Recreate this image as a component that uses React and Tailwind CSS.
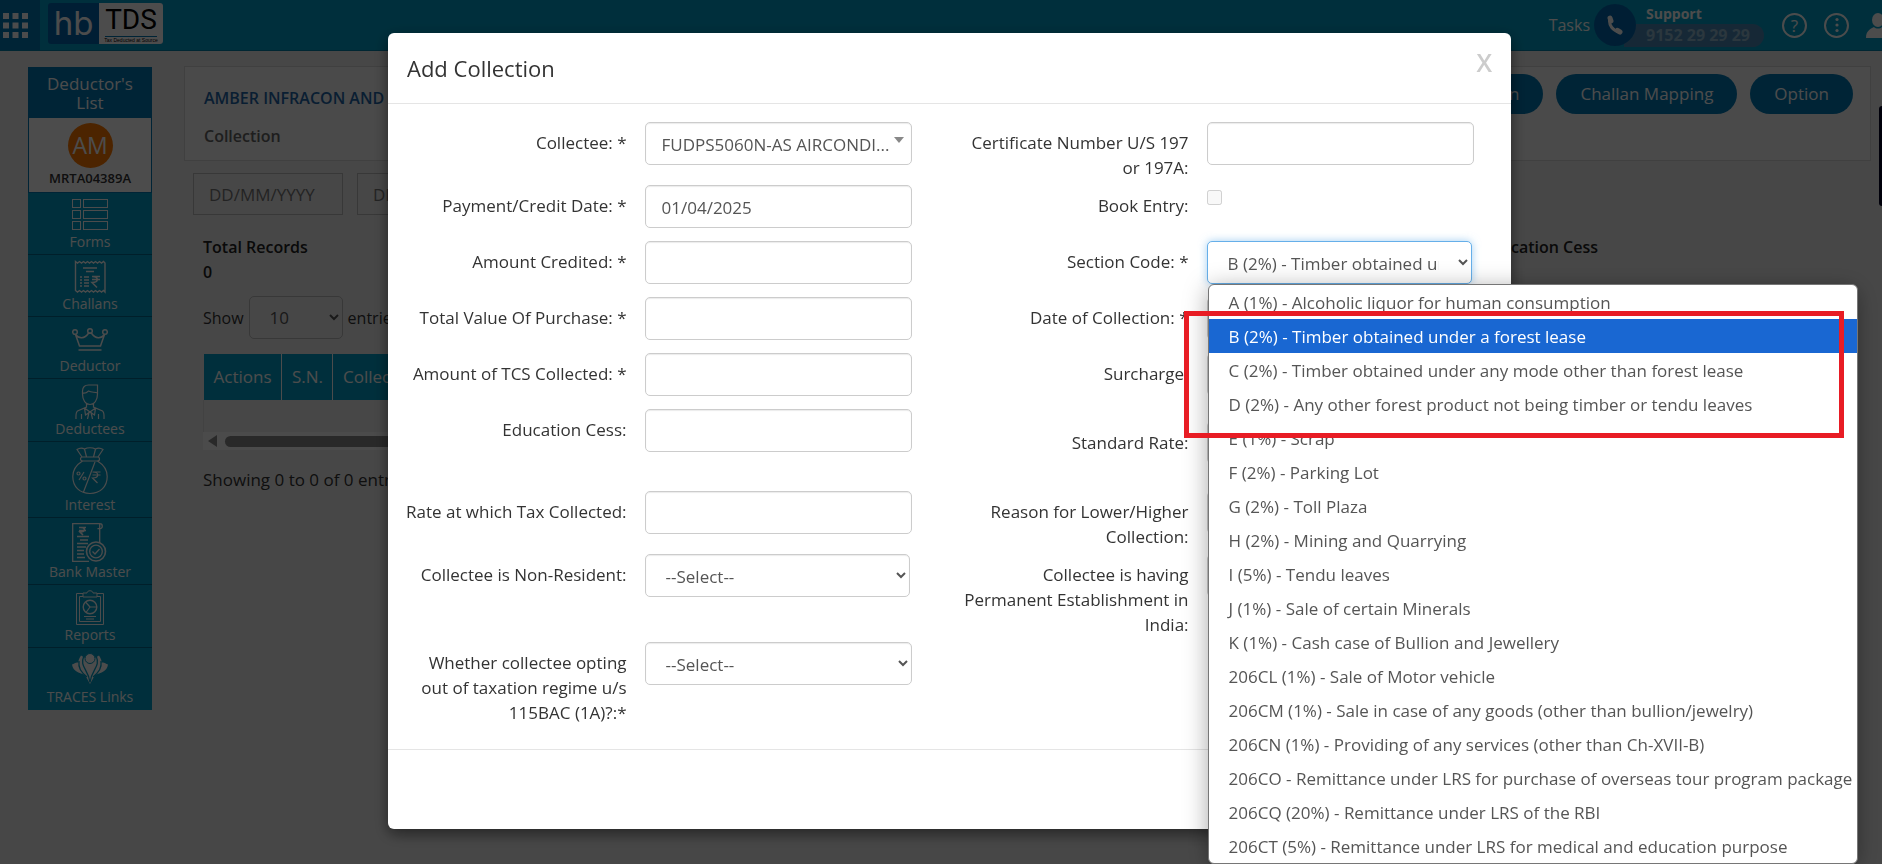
import React, { useState } from "react";

const SECTION_CODES = [
  "A (1%) - Alcoholic liquor for human consumption",
  "B (2%) - Timber obtained under a forest lease",
  "C (2%) - Timber obtained under any mode other than forest lease",
  "D (2%) - Any other forest product not being timber or tendu leaves",
  "E (1%) - Scrap",
  "F (2%) - Parking Lot",
  "G (2%) - Toll Plaza",
  "H (2%) - Mining and Quarrying",
  "I (5%) - Tendu leaves",
  "J (1%) - Sale of certain Minerals",
  "K (1%) - Cash case of Bullion and Jewellery",
  "206CL (1%) - Sale of Motor vehicle",
  "206CM (1%) - Sale in case of any goods (other than bullion/jewelry)",
  "206CN (1%) - Providing of any services (other than Ch-XVII-B)",
  "206CO - Remittance under LRS for purchase of overseas tour program package",
  "206CQ (20%) - Remittance under LRS of the RBI",
  "206CT (5%) - Remittance under LRS for medical and education purpose",
];

const svgProps = {
  fill: "none",
  stroke: "currentColor",
  strokeWidth: 1,
  "aria-hidden": true,
};

const FormsIcon = () => (
  <svg width="36" height="34" viewBox="0 0 36 34" {...svgProps}>
    {[1.5, 12.5, 23.5].map((y) => (
      <g key={y}>
        <rect x="0.5" y={y} width="8" height="8" />
        <rect x="11.5" y={y} width="24" height="8" />
      </g>
    ))}
  </svg>
);

const ChallansIcon = () => (
  <svg width="36" height="34" viewBox="0 0 36 34" {...svgProps}>
    <path d="M3.5 1.5l2 1.500 2-1.500 2 1.500 2-1.500 2 1.500 2-1.500 2 1.500 2-1.500 2 1.500 2-1.500 2 1.500 2-1.500 2 1.500 2-1.500 1.500 1.500v29l-1.500-1.500-2 1.500-2-1.500-2 1.500-2-1.500-2 1.500-2-1.500-2 1.500-2-1.500-2 1.500-2-1.500-2 1.500-2-1.500-2 1.500-2-1.500z" strokeWidth="1.4" />
    <path d="M11 8h14M14 11.500h8M12 17h5M12 20h5M12 23h5M12 26h5M8 17h2M8 20h2M8 23h2M8 26h2" strokeWidth="1.500" />
    <path d="M20 16.500h8M20 19.500h8M20 16.500c7 0 7 6 0 6l5 5" strokeWidth="1.500" />
  </svg>
);

const DeductorIcon = () => (
  <svg width="36" height="34" viewBox="0 0 36 34" {...svgProps} strokeWidth="1.5">
    <circle cx="3" cy="10" r="2.300" />
    <circle cx="18" cy="9" r="2.300" />
    <circle cx="33" cy="10" r="2.300" />
    <path d="M3.500 12.500l4 11.500h21l4-11.500c-3.500 4.500-9 4.500-13-1.300h-3c-4 5.800-9.500 5.800-13 1.300zM6.500 28h23" />
  </svg>
);

const DeducteesIcon = () => (
  <svg width="36" height="35" viewBox="0 0 36 35" {...svgProps} strokeWidth="1.2">
    <path d="M10.500 10V7c0-4 2.500-6 6-6h9v9c0 6-3 10.500-7.500 10.500S10.500 16 10.500 10zM10.500 9c6 .5 4-1.500 6-2 3 1.500 6 1 9 2M14.500 19.500v3.500l-9 4c-2 1.500-1.500 5-1.500 8M21.500 19.500v3.500l9 4c2 1.500 1.500 5 1.500 8M12.500 24l5.500 4 5.500-4M12.500 24l1 7 4.500-3 4.500 3 1-7M17 28.500l-1.500 6.500M19 28.500l1.500 6.500M9.500 30v5M26.500 30v5" />
  </svg>
);

const InterestIcon = () => (
  <svg width="36" height="48" viewBox="0 0 36 48" {...svgProps} strokeWidth="1.2">
    <path d="M10 10L5 2.500c3-2 5-2 7.500-.5 3-1.500 8-1.500 11 0 2.500-1.500 4.500-1.500 7.500.5L26 10M12.500 2l2 8M23.500 2l-2 8" />
    <rect x="8.500" y="10" width="19" height="4" rx="2" />
    <path d="M10.500 14C4 18 .8 23 .8 29.500.8 40 8 46.500 18 46.500S35.200 40 35.200 29.500C35.200 23 32 18 25.500 14M23 15L11.500 45" />
    <path d="M7 33l5-8M20.500 25h8M20.500 28h8M20.500 25c7 0 7 6 0 6l5 5" />
    <circle cx="6.500" cy="26.500" r="1.500" />
    <circle cx="12.500" cy="31.500" r="1.500" />
  </svg>
);

const BankIcon = () => (
  <svg width="36" height="39" viewBox="0 0 36 39" {...svgProps} strokeWidth="1.3">
    <path d="M17 38.300H.7V.7h27v19M25 .7h3c3 0 3 5 0 5h-2.500" />
    <path d="M7 4.500h7M7 7.500h7M8 4.500c6 0 6 4.500 0 4.500l3 3M5 13.500h12M8 17h8M5 20.500h11M5 24h9M5 27.500h7M5 31h7M5 34.500h8" strokeWidth="1.600" />
    <circle cx="24" cy="28.500" r="9.500" strokeWidth="1.600" />
    <circle cx="24" cy="28.500" r="6.300" />
    <path d="M20.500 28.500l2.500 2.500 4.500-5" />
  </svg>
);

const ReportsIcon = () => (
  <svg width="36" height="35" viewBox="0 0 36 35" {...svgProps}>
    <path d="M11 3.500H4.500v31h27v-31H25M11 6.500H7.500v25h21v-25H25M11 3v4h14V3h-4c0-3-6-3-6 0z" />
    <circle cx="18" cy="17" r="6.800" strokeWidth="1.400" />
    <path d="M18 17h6.500M18 17l-4.500-5M18 17l-4 5.500M12 26.500h12M14 29h8" strokeWidth="1.200" />
  </svg>
);

const TracesIcon = () => (
  <svg width="36" height="34" viewBox="0 0 36 34" aria-hidden="true">
    <path d="M9 2.500C7 6 6 8 6.500 10 4.500 8.500 2.500 11 0 11.500 1 19 8 20 13 22l5 9 5-9c5-2 12-3 13-10.500-2.500-.5-4.500-3-6.500-1.500.5-2-.5-4-2.500-7.500l-5 3h-8z" fill="currentColor" />
    <path d="M12 2.500c-5 12 4.500 13 6 27 1.500-14 11-15 6-27M7 8c-1 7 2 11 8 16M29 8c1 7-2 11-8 16" fill="none" stroke="#009fc9" strokeWidth="1.300" />
    <circle cx="18" cy="5.500" r="5" fill="currentColor" stroke="#009fc9" />
  </svg>
);

const MENU = [
  { label: "Forms", Icon: FormsIcon },
  { label: "Challans", Icon: ChallansIcon },
  { label: "Deductor", Icon: DeductorIcon },
  { label: "Deductees", Icon: DeducteesIcon },
  { label: "Interest", Icon: InterestIcon },
  { label: "Bank Master", Icon: BankIcon },
  { label: "Reports", Icon: ReportsIcon },
  { label: "TRACES Links", Icon: TracesIcon },
];

const inputClass =
  "block h-[43px] w-full rounded-[5px] border border-[#ccc] bg-white px-4 pt-0.5 text-[#555] shadow-[inset_0_1px_1px_rgba(0,0,0,0.08)] outline-none";

function TopBar() {
  return (
    <header className="isolate flex h-[51px] items-center justify-between overflow-hidden border-b border-[#007fa8] bg-[#009fc9]">
      <div className="flex h-full items-center gap-2">
        <button aria-label="Apps" className="flex h-full w-10 items-center bg-[#0079b5] pl-[3px] text-white">
          <svg width="25" height="25" viewBox="0 0 25 25" fill="currentColor" aria-hidden="true">
            {[0, 9.500, 19].map((y) => [0, 9.500, 19].map((x) => <rect key={`${x}-${y}`} x={x} y={y} width="6" height="6" />))}
          </svg>
        </button>
        <a href="#home" className="mb-1 flex h-[41px] w-[115px] rounded-[3px] bg-[#0067b0]">
          <span className="flex w-[51px] items-center justify-center font-['Inter',sans-serif] text-[33px] leading-[40px] text-white">
            hb
          </span>
          <span className="flex flex-1 flex-col items-center rounded-r-[3px] bg-white text-black">
            <span className="border-b border-[#0079b5] font-['Roboto',sans-serif] text-[28px] leading-[33px]">TDS</span>
            <span className="font-['Liberation_Sans',sans-serif] text-[5px] leading-[7px] whitespace-nowrap">Tax Deducted at Source</span>
          </span>
        </a>
      </div>
      <div className="-mr-2 flex items-center text-white">
        <a href="#tasks" className="mr-1 text-[16px]">Tasks</a>
        <span className="z-10 flex size-[42px] items-center justify-center rounded-full bg-[#0067b0]">
          <svg width="16" height="20" viewBox="0 0 16 20" fill="none" stroke="currentColor" strokeWidth="3" strokeLinecap="round" aria-hidden="true">
            <path d="M3 3c-2 7 3 13 10 14" />
            <path d="M3 3l1 3M10.500 15.500l2.500 1.500" strokeWidth="5" />
          </svg>
        </span>
        <div className="mr-[18px] -ml-3 w-[140px] text-[14px] leading-[20px] font-bold">
          <div className="pl-[22px]">Support</div>
          <div className="rounded-r-full bg-[#4b88b4] pl-[22px] text-[16px] leading-[23px] text-[#90b8d0]">9152 29 29 29</div>
        </div>
        <button aria-label="Help" className="mr-[17px] flex size-[25px] items-center justify-center rounded-full border-2 border-white text-[17px] leading-none">
          ?
        </button>
        <button aria-label="More" className="mr-[17px] flex size-[25px] items-center justify-center rounded-full border-2 border-white">
          <svg width="4" height="16" viewBox="0 0 4 16" fill="currentColor" aria-hidden="true">
            <circle cx="2" cy="2.500" r="1.600" />
            <circle cx="2" cy="8" r="1.600" />
            <circle cx="2" cy="13.500" r="1.600" />
          </svg>
        </button>
        <button aria-label="Account">
          <svg width="24" height="25" viewBox="0 0 24 25" fill="currentColor" aria-hidden="true">
            <ellipse cx="12" cy="7" rx="6" ry="7" />
            <path d="M0 25c0-7 4-9 8-11 2 2 6 2 8 0 4 2 8 4 8 11z" />
          </svg>
        </button>
      </div>
    </header>
  );
}

function Sidebar() {
  return (
    <aside className="w-[124px] shrink-0 self-start bg-[#009fc9] text-center text-white">
      <h2 className="bg-[#0079b5] px-4 pt-[7px] pb-[5px] text-[17px] leading-[19px]">Deductor's List</h2>
      <div className="flex h-[76px] flex-col items-center border border-[#0079b5] bg-white pt-[5px]">
        <div className="flex size-[45px] items-center justify-center rounded-full bg-[#ff7a00] text-[23px]">AM</div>
        <span className="text-[13px] leading-5 font-semibold text-[#333]">MRTA04389A</span>
      </div>
      <nav className="pb-px">
        {MENU.map(({ label, Icon }) => (
          <a key={label} href="#menu" className="flex flex-col items-center border-b border-[#006a8c] pt-[5px] pb-0.5 last:border-b-0">
            <Icon />
            <span className="text-[14px] leading-5">{label}</span>
          </a>
        ))}
      </nav>
    </aside>
  );
}

function Content() {
  const pill = "h-10 rounded-full bg-[#0079b5] px-6 text-[17px] text-white";
  return (
    <main className="min-w-0 flex-1 pt-[15px]">
      <section className="flex h-[95px] justify-between border border-[#d8d8d8] bg-[#f7f7f7] pt-[7px] pr-[17px] pl-[19px]">
        <div>
          <h1 className="pt-3 text-[16px] leading-6 font-semibold text-[#1f66a8]">AMBER INFRACON AND DEVELOPERS</h1>
          <p className="pt-[14px] text-[16px] leading-6 font-semibold text-[#666]">Collection</p>
        </div>
        <div className="flex gap-[13px]">
          <button className={pill}>Add Collection</button>
          <button className={pill}>Challan Mapping</button>
          <button className={pill}>Option</button>
        </div>
      </section>

      <div className="mt-3 flex gap-[14px] pl-[9px]">
        <input aria-label="From date" placeholder="DD/MM/YYYY" className="h-[42px] w-[150px] border border-[#bbb] px-[15px] text-[17px] placeholder:text-[#777]" />
        <input aria-label="To date" placeholder="DD/MM/YYYY" className="h-[42px] w-[150px] border border-[#bbb] px-[15px] text-[17px] placeholder:text-[#777]" />
      </div>

      <div className="mt-5 flex justify-between pr-[273px] pl-[19px] text-[16px] leading-[25px] font-semibold text-[#222]">
        <div>
          <div>Total Records</div>
          <div>0</div>
        </div>
        <div>Education Cess</div>
      </div>

      <div className="mt-[11px] flex items-center gap-[5px] pl-[19px] text-[16px] text-[#333]">
        <label htmlFor="page-size">Show</label>
        <select id="page-size" className="h-[43px] w-[94px] rounded-[5px] border border-[#bbb] pl-4 text-[17px] text-[#555]">
          <option>10</option>
        </select>
        <span>entries</span>
      </div>

      <div className="mt-[15px] mr-4 ml-[19px] overflow-hidden">
        <table className="w-full text-left text-[17px]">
          <thead>
            <tr className="h-[46px] bg-[#009fc9] text-white">
              <th className="w-[78px] border-r border-white pl-[10px] font-normal">Actions</th>
              <th className="w-[51px] border-r border-white pl-[10px] font-normal">S.N.</th>
              <th className="pl-[10px] font-normal">Collectee</th>
            </tr>
          </thead>
          <tbody>
            <tr className="h-8 border-l border-[#ddd]">
              <td colSpan="3" />
            </tr>
          </tbody>
        </table>
        <div className="flex h-[18px] items-center gap-2 bg-[#fafafa] pl-[5px]">
          <svg width="9" height="12" viewBox="0 0 9 12" fill="#8b8b8b" aria-hidden="true">
            <path d="M0 6l9-6v12z" />
          </svg>
          <div className="h-[11px] w-3/5 rounded-full bg-[#8b8b8b]" />
        </div>
      </div>
      <p className="mt-[18px] pl-[19px] text-[17px] leading-6 text-[#333]">Showing 0 to 0 of 0 entries</p>
    </main>
  );
}

function Field({ id, label, labelClass = "pt-2", children }) {
  return (
    <div className="flex gap-[18px]">
      <label htmlFor={id} className={`mb-[5px] flex-[227] basis-0 text-right ${labelClass}`}>
        {label}
      </label>
      <div className="relative mb-[13px] flex-[268] basis-0">{children || <input id={id} className={inputClass} />}</div>
    </div>
  );
}

function Row({ children }) {
  return <div className="grid grid-cols-2 gap-x-[50px]">{children}</div>;
}

function SectionList({ value, onPick }) {
  return (
    <div className="absolute top-full left-px z-10 w-[650px]">
      <ul role="listbox" aria-label="Section Code" className="overflow-hidden rounded-md border border-[#767676] bg-white text-[#555] shadow-[0_4px_24px_rgba(0,0,0,0.35)]">
        {SECTION_CODES.map((code) => (
          <li
            key={code}
            role="option"
            aria-selected={code === value}
            onClick={() => onPick(code)}
            className={`h-[34px] pl-5 leading-[35px] whitespace-nowrap ${code === value ? "bg-[#1967d2] text-white" : ""}`}
          >
            {code}
          </li>
        ))}
      </ul>
      <div className="pointer-events-none absolute top-[27px] right-[14px] -left-6 h-[127px] border-[5px] border-[#e81c24]" />
    </div>
  );
}

function CollectionModal() {
  const [section, setSection] = useState(SECTION_CODES[1]);

  return (
    <div className="fixed inset-0 flex items-start justify-center pt-[33px] pl-[17px]">
      <form role="dialog" aria-label="Add Collection" className="w-full max-w-[1123px] rounded-md bg-white text-[17px] leading-[25px] text-[#333] shadow-[0_5px_15px_rgba(0,0,0,0.5)]">
        <div className="flex h-[71px] items-center justify-between border-b border-[#e5e5e5] px-[19px]">
          <h2 className="text-[22px]">Add Collection</h2>
          <button type="button" aria-label="Close" className="pb-3 text-[25px] font-semibold text-[#ccc]">X</button>
        </div>

        <div className="pt-[18px] pr-[37px] pb-[19px] pl-3">
          <Row>
            <Field id="collectee" label="Collectee: *">
              <select id="collectee" className={`${inputClass} appearance-none`}>
                <option>FUDPS5060N-AS AIRCONDI...</option>
              </select>
              <svg width="10" height="6" viewBox="0 0 10 6" fill="#888" className="pointer-events-none absolute top-[15px] right-2" aria-hidden="true">
                <path d="M0 0h10L5 6z" />
              </svg>
            </Field>
            <Field id="certificate" label="Certificate Number U/S 197 or 197A:" />
          </Row>
          <Row>
            <Field id="payment-date" label="Payment/Credit Date: *">
              <input id="payment-date" defaultValue="01/04/2025" className={inputClass} />
            </Field>
            <Field id="book-entry" label="Book Entry:">
              <input id="book-entry" type="checkbox" disabled className="mt-[5px] block size-[15px]" />
            </Field>
          </Row>
          <Row>
            <Field id="amount" label="Amount Credited: *" />
            <Field id="section" label="Section Code: *">
              <select
                id="section"
                value={section}
                onChange={(e) => setSection(e.target.value)}
                className="block h-[43px] w-[calc(100%-2px)] rounded-[5px] border border-[#66afe9] bg-white px-4 pt-0.5 text-[#555] shadow-[0_0_8px_rgba(102,175,233,0.6)] outline-none"
              >
                {SECTION_CODES.map((code) => (
                  <option key={code}>{code}</option>
                ))}
              </select>
              <SectionList value={section} onPick={setSection} />
            </Field>
          </Row>
          <Row>
            <Field id="purchase" label="Total Value Of Purchase: *" />
            <Field id="collection-date" label="Date of Collection: *" />
          </Row>
          <Row>
            <Field id="tcs" label="Amount of TCS Collected: *" />
            <Field id="surcharge" label="Surcharge:" />
          </Row>
          <div className="min-h-[82px]">
            <Row>
              <Field id="cess" label="Education Cess:" />
              <Field id="standard-rate" label="Standard Rate:" labelClass="pt-[21px]">
                <input id="standard-rate" className={`${inputClass} mt-3`} />
              </Field>
            </Row>
          </div>
          <Row>
            <Field id="rate" label="Rate at which Tax Collected:" />
            <Field id="reason" label="Reason for Lower/Higher Collection:" />
          </Row>
          <Row>
            <Field id="non-resident" label="Collectee is Non-Resident:">
              <div className="pr-0.5">
                <select id="non-resident" className={inputClass}>
                  <option>--Select--</option>
                </select>
              </div>
            </Field>
            <Field id="establishment" label="Collectee is having Permanent Establishment in India:" />
          </Row>
          <Row>
            <Field id="regime" label="Whether collectee opting out of taxation regime u/s 115BAC (1A)?:*">
              <select id="regime" className={inputClass}>
                <option>--Select--</option>
              </select>
            </Field>
          </Row>
        </div>

        <div className="h-[80px] border-t border-[#e5e5e5]" />
      </form>
    </div>
  );
}

function App() {
  return (
    <div className="relative min-h-screen overflow-hidden bg-[#efefef] font-['Open_Sans','Noto_Sans',sans-serif]">
      <TopBar />
      <div className="flex gap-8 pr-[11px] pl-7">
        <div className="pt-4">
          <Sidebar />
        </div>
        <Content />
      </div>
      <div className="absolute top-[106px] right-0 h-[100px] w-[3px] rounded-l bg-[#000022]" />
      <div className="fixed inset-0 bg-black/70" />
      <CollectionModal />
    </div>
  );
}

export default App;
